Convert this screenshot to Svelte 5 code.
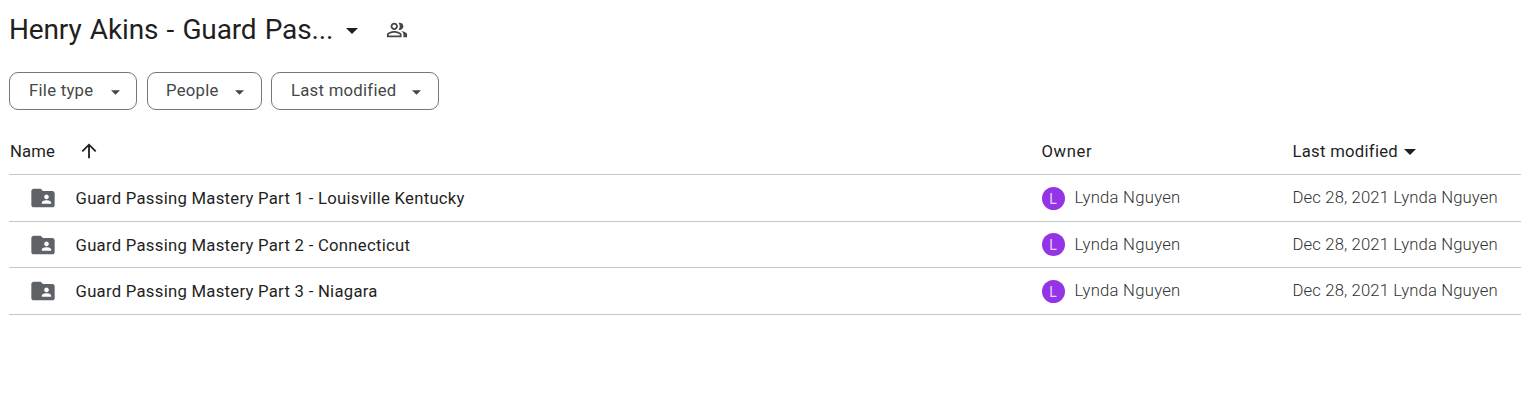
<script lang="ts">
    const filters = [
        { label: "File type", size: "file-type" },
        { label: "People", size: "people" },
        { label: "Last modified", size: "modified" },
    ];

    const folders = [
        { name: "Guard Passing Mastery Part 1 - Louisville Kentucky" },
        { name: "Guard Passing Mastery Part 2 - Connecticut" },
        { name: "Guard Passing Mastery Part 3 - Niagara" },
    ].map((folder) => ({
        ...folder,
        owner: "Lynda Nguyen",
        modified: "Dec 28, 2021",
    }));
</script>

<main class="drive">
    <header class="title-bar">
        <h1>Henry Akins - Guard Pas...</h1>
        <svg class="title-caret" viewBox="0 0 12 6" aria-hidden="true">
            <path d="M0 0h12L6 6z" />
        </svg>
        <svg class="shared" viewBox="0 0 24 24" aria-hidden="true">
            <path
                d="M16.67 13.13C18.04 14.06 19 15.32 19 17v3h4v-3c0-2.18-3.57-3.47-6.33-3.87zM15 12c2.21 0 4-1.79 4-4s-1.79-4-4-4c-.47 0-.91.1-1.33.24C14.5 5.27 15 6.58 15 8s-.5 2.73-1.33 3.76c.42.14.86.24 1.33.24zM9 12c2.21 0 4-1.79 4-4s-1.79-4-4-4-4 1.79-4 4 1.79 4 4 4zm0-6c1.1 0 2 .9 2 2s-.9 2-2 2-2-.9-2-2 .9-2 2-2zM9 13c-2.67 0-8 1.34-8 4v3h16v-3c0-2.66-5.33-4-8-4zm6 5H3v-.99C3.2 16.29 6.3 15 9 15s5.8 1.29 6 2v1z"
            />
        </svg>
    </header>

    <div class="filters">
        {#each filters as filter}
            <button class="chip {filter.size}" type="button">
                <span>{filter.label}</span>
                <svg viewBox="0 0 10 5" aria-hidden="true">
                    <path d="M0 0h10L5 5z" />
                </svg>
            </button>
        {/each}
    </div>

    <div class="row head">
        <div class="cell">
            <span class="name-label">Name</span>
            <svg class="sort" viewBox="0 0 16 16" aria-hidden="true">
                <path d="M8 15.2V2M1.3 8.4L8 1.7l6.7 6.7" />
            </svg>
        </div>
        <div class="cell owner-label">Owner</div>
        <div class="cell">
            <span>Last modified</span>
            <svg class="head-caret" viewBox="0 0 12 6" aria-hidden="true">
                <path d="M0 0h12L6 6z" />
            </svg>
        </div>
    </div>

    {#each folders as folder}
        <div class="row">
            <div class="cell name">
                <svg class="folder" viewBox="0 0 24 24" aria-hidden="true">
                    <path
                        d="M20 6h-8l-2-2H4c-1.1 0-1.99.9-1.99 2L2 18c0 1.1.9 2 2 2h16c1.1 0 2-.9 2-2V8c0-1.1-.9-2-2-2zm-5 3c1.1 0 2 .9 2 2s-.9 2-2 2-2-.9-2-2 .9-2 2-2zm4 8h-8v-1c0-1.33 2.67-2 4-2s4 .67 4 2v1z"
                    />
                </svg>
                <span>{folder.name}</span>
            </div>
            <div class="cell owner">
                <span class="avatar">{folder.owner[0]}</span>
                <span class="muted">{folder.owner}</span>
            </div>
            <div class="cell">
                <span class="muted date">{folder.modified} {folder.owner}</span>
            </div>
        </div>
    {/each}
</main>

<style>
    :global(body) {
        background: #fff;
    }

    .drive {
        box-sizing: border-box;
        height: 409px;
        padding-left: 9px;
        overflow: hidden;
        color: #1f1f1f;
        font-family: Roboto, "Liberation Sans", sans-serif;
        font-size: 16.7px;
        letter-spacing: 0.27px;
    }

    svg {
        display: block;
        flex: none;
        fill: currentColor;
    }

    .title-bar {
        display: flex;
        align-items: center;
        height: 60px;
    }

    h1 {
        width: 337px;
        margin: 0;
        font-size: 28px;
        font-weight: 400;
        letter-spacing: -0.15px;
        word-spacing: 1.5px;
        line-height: 60px;
        white-space: nowrap;
    }

    .title-caret {
        width: 12px;
        height: 6px;
        margin-top: 2px;
    }

    .shared {
        width: 22px;
        height: 22px;
        margin-left: 27.5px;
        color: #444746;
    }

    .filters {
        display: flex;
        height: 38px;
        margin-top: 12px;
    }

    .chip {
        box-sizing: border-box;
        display: flex;
        align-items: center;
        justify-content: space-between;
        height: 38px;
        margin: 0 10px 0 0;
        padding: 0 17px 1px 19px;
        border: 1px solid #747775;
        border-radius: 9px;
        background: #fff;
        color: #444746;
        font: inherit;
        letter-spacing: 0.27px;
    }

    .chip svg {
        width: 9px;
        height: 5px;
        margin-top: 3px;
    }

    .file-type {
        width: 128px;
        padding-right: 16px;
    }

    .people {
        width: 115px;
        margin-right: 9px;
        padding-left: 18px;
    }

    .modified {
        width: 168px;
    }

    .row {
        box-sizing: border-box;
        display: grid;
        grid-template-columns: 1032.5px 251px 1fr;
        height: 46.67px;
        padding-top: 0.6px;
        border-bottom: 1px solid #c7c7c7;
    }

    .row.head {
        height: 65px;
        padding-top: 18px;
    }

    .cell {
        display: flex;
        align-items: center;
        white-space: nowrap;
    }

    .name-label {
        margin-left: 1px;
        letter-spacing: 0.1px;
    }

    .owner-label {
        letter-spacing: 0.6px;
    }

    .sort {
        width: 16px;
        height: 16px;
        margin-left: 26.5px;
        fill: none;
        stroke: currentColor;
        stroke-width: 1.8;
    }

    .head-caret {
        width: 12px;
        height: 6px;
        margin-left: 5.5px;
        margin-top: 1px;
    }

    .folder {
        width: 28px;
        height: 28px;
        margin: 0 18.5px 0 20px;
        color: #5f6368;
    }

    .name span {
        margin-top: 1px;
    }

    .avatar {
        width: 23px;
        height: 23px;
        margin-right: 10px;
        border-radius: 50%;
        background: #9334e6;
        color: #e9d2fd;
        font-size: 14px;
        letter-spacing: 0;
        line-height: 24px;
        text-align: center;
    }

    .muted {
        margin-top: -1px;
        color: #303332;
        font-weight: 300;
        letter-spacing: 0.25px;
    }

    .date {
        letter-spacing: 0.13px;
    }
</style>
